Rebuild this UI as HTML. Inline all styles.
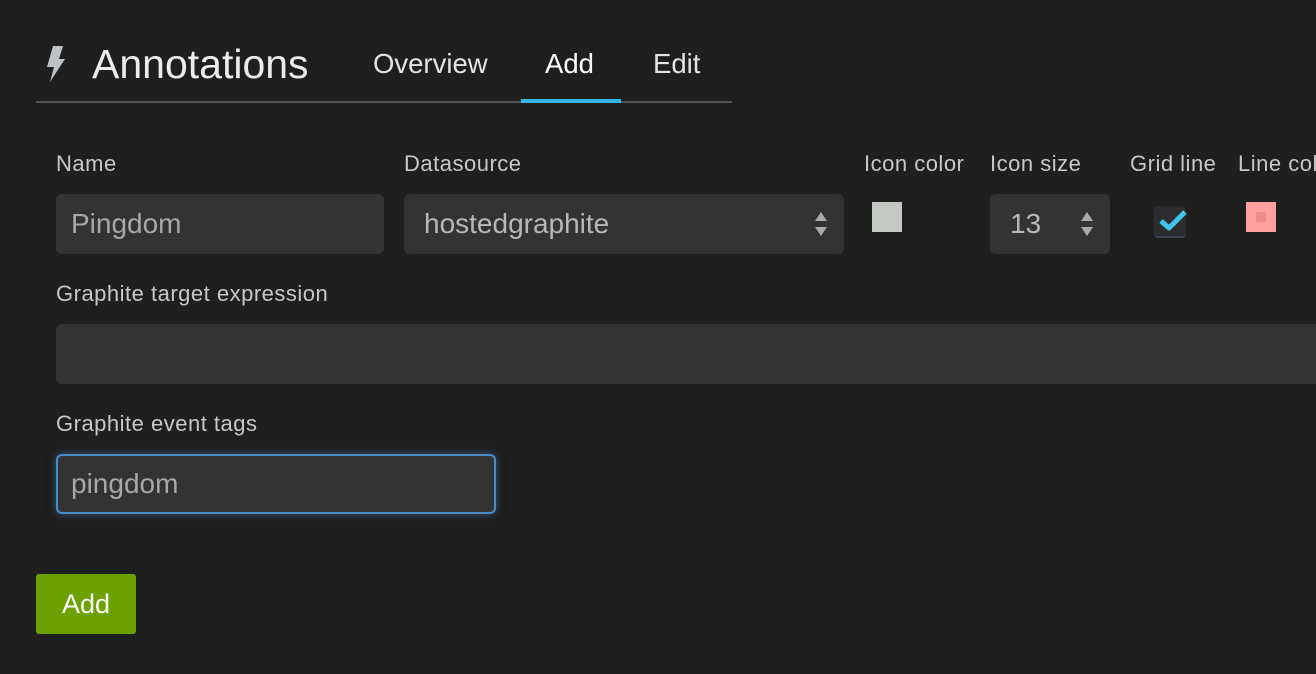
<!DOCTYPE html>
<html><head><style>
body{margin:0;width:1316px;height:674px;background:#1f1f1f;overflow:hidden;font-family:"Liberation Sans",sans-serif;position:relative}
.a{position:absolute;white-space:nowrap}
.lbl{color:#c8c8c8;font-size:22px;letter-spacing:0.5px}
.inp{position:absolute;background:#333;border-radius:6px;color:#a8a8a8;font-size:28px;box-sizing:border-box;padding-left:15px;line-height:60px;height:60px}
.tab{color:#e4e4e4;font-size:27.5px}
</style></head><body>
<svg class="a" style="left:44px;top:46px" width="24" height="38" viewBox="0 0 24 38"><path d="M9 0 L19 0 L15 13 L21 13 L6 36 L10 21 L3 21 Z" fill="#bfc3c6"/></svg>
<div class="a" style="left:92px;top:41px;color:#ececec;font-size:41px">Annotations</div>
<div class="a tab" style="left:373px;top:48px">Overview</div>
<div class="a tab" style="left:545px;top:48px;color:#fff">Add</div>
<div class="a tab" style="left:653px;top:48px">Edit</div>
<div class="a" style="left:36px;top:101px;width:696px;height:2px;background:#555"></div>
<div class="a" style="left:521px;top:99px;width:100px;height:4px;background:#33b5e5"></div>

<div class="a lbl" style="left:56px;top:151px">Name</div>
<div class="a lbl" style="left:404px;top:151px">Datasource</div>
<div class="a lbl" style="left:864px;top:151px">Icon color</div>
<div class="a lbl" style="left:990px;top:151px">Icon size</div>
<div class="a lbl" style="left:1130px;top:151px">Grid line</div>
<div class="a lbl" style="left:1238px;top:151px">Line color</div>

<div class="inp" style="left:56px;top:194px;width:328px">Pingdom</div>
<div class="inp" style="left:404px;top:194px;width:440px;padding-left:20px;color:#b8b8b8">hostedgraphite</div>
<svg class="a" style="left:814px;top:210px" width="14" height="28"><path d="M7 2L13 11H1Z M7 26L13 17H1Z" fill="#aaa"/></svg>
<div class="a" style="left:872px;top:202px;width:30px;height:30px;background:#c4cac3"></div>
<div class="inp" style="left:990px;top:194px;width:120px;padding-left:20px;color:#b8b8b8">13</div>
<svg class="a" style="left:1080px;top:210px" width="14" height="28"><path d="M7 2L13 11H1Z M7 26L13 17H1Z" fill="#aaa"/></svg>
<div class="a" style="left:1154px;top:206px;width:32px;height:32px;background:#2c2c2e;border-radius:4px;border-bottom:2px solid #3a4450;box-sizing:border-box"></div>
<svg class="a" style="left:1156px;top:204px" width="34" height="30"><path d="M5 17L13 24L29 8" stroke="#3fc4ea" stroke-width="5" fill="none" stroke-linejoin="round"/></svg>
<div class="a" style="left:1246px;top:202px;width:30px;height:30px;background:#ff9f9f"></div>
<div class="a" style="left:1256px;top:212px;width:10px;height:10px;background:#ec8e8e"></div>

<div class="a lbl" style="left:56px;top:281px">Graphite target expression</div>
<div class="inp" style="left:56px;top:324px;width:1280px"></div>
<div class="a lbl" style="left:56px;top:411px">Graphite event tags</div>
<div class="inp" style="left:56px;top:454px;width:440px;border:2px solid #4a8cc8;box-shadow:0 0 8px rgba(70,140,210,.5);line-height:56px;padding-left:13px">pingdom</div>

<div class="a" style="left:36px;top:574px;width:100px;height:60px;background:#6ba100;border-radius:3px;color:#fff;font-size:27px;line-height:60px;text-align:center">Add</div>
</body></html>
